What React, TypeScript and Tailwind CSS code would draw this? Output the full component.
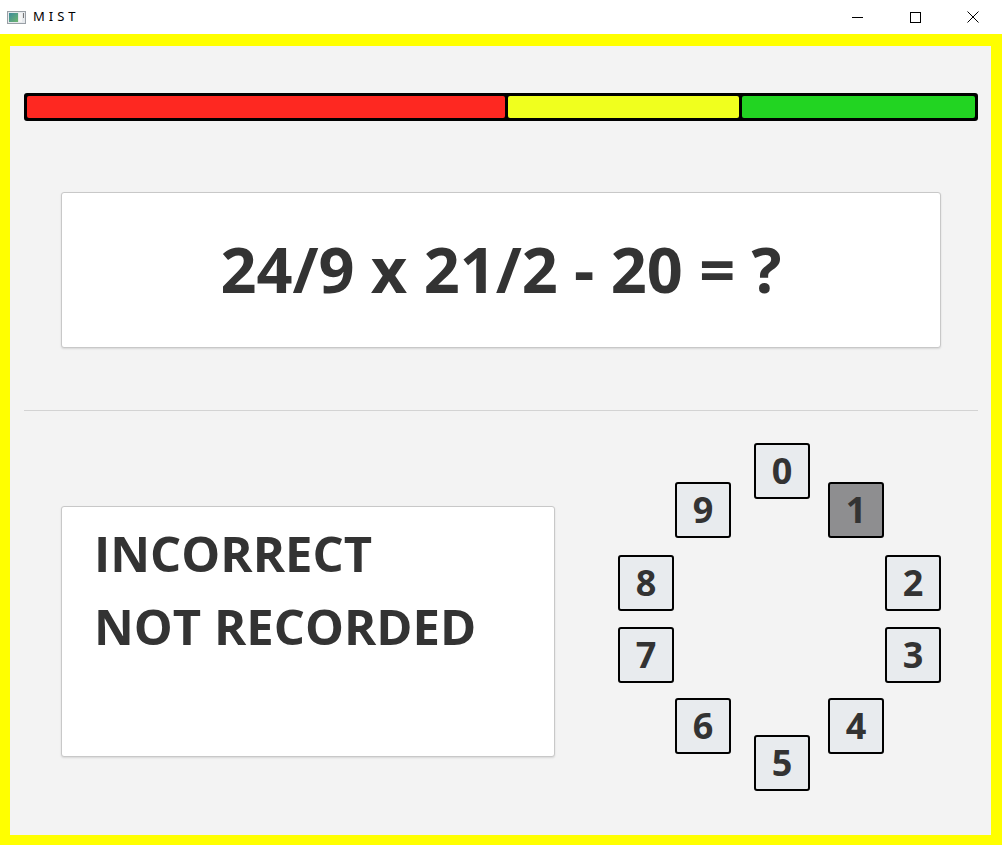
import React from 'react';

const KEYS: { n: number; left: number; top: number }[] = [
  { n: 0, left: 136, top: 0 },
  { n: 1, left: 210, top: 39 },
  { n: 9, left: 57, top: 39 },
  { n: 8, left: 0, top: 112 },
  { n: 2, left: 267, top: 112 },
  { n: 7, left: 0, top: 184 },
  { n: 3, left: 267, top: 184 },
  { n: 6, left: 57, top: 255 },
  { n: 4, left: 210, top: 255 },
  { n: 5, left: 136, top: 292 },
];

const SELECTED = 1;

export default function App() {
  return (
    <div className="w-[1002px] h-[845px] flex flex-col bg-white font-['Open_Sans',sans-serif] text-[#333333]">
      {/* Window title bar */}
      <div className="h-[34px] flex items-center bg-white">
        <div className="ml-[7px] w-[19px] h-[13px] border border-[#9aa0a6] bg-[#e6e9ec] flex p-[1px] gap-[1px]">
          <div className="w-[9px] h-full bg-gradient-to-br from-[#3d8a9a] to-[#6fb56a]" />
          <div className="flex-1 h-full bg-[#f5f5f5]" />
          <div className="w-[1px] h-[5px] bg-[#777]" />
        </div>
        <span className="ml-[7px] text-[13px] tracking-[4px] text-black font-['Noto_Sans',sans-serif]">MIST</span>
        <div className="ml-auto flex items-center h-full">
          <div className="w-[58px] h-full flex items-center justify-center">
            <div className="w-[11px] h-[1px] bg-black" />
          </div>
          <div className="w-[58px] h-full flex items-center justify-center">
            <div className="w-[11px] h-[11px] border border-black" />
          </div>
          <div className="w-[58px] h-full flex items-center justify-center">
            <svg width="12" height="12" viewBox="0 0 12 12">
              <path d="M0.5 0.5 L11.5 11.5 M11.5 0.5 L0.5 11.5" stroke="black" strokeWidth="1" />
            </svg>
          </div>
        </div>
      </div>

      {/* App area with yellow frame */}
      <div className="flex-1 border-t-[12px] border-l-[10px] border-r-[11px] border-b-[10px] border-[#ffff00] bg-[#f3f3f3] flex flex-col">
        {/* Timer bar */}
        <div className="mt-[47px] ml-[14px] mr-[13px] h-[28px] border-[3px] border-black rounded-[3px] bg-black flex gap-[3px]">
          <div className="flex-[478] bg-[#fe2821] rounded-[2px]" />
          <div className="flex-[231] bg-[#f0ff1e] rounded-[2px]" />
          <div className="flex-[233] bg-[#22d422] rounded-[2px]" />
        </div>

        {/* Question */}
        <div className="mt-[71px] ml-[51px] mr-[50px] h-[156px] bg-white border border-[#c8c8c8] rounded-[3px] shadow-[0_1px_2px_rgba(0,0,0,0.12)] flex items-center justify-center">
          <span className="text-[63px] font-bold leading-none -mt-[4px]">24/9 x 21/2 - 20 = ?</span>
        </div>

        {/* Divider */}
        <div className="mt-[62px] ml-[14px] mr-[13px] h-[1px] bg-[#d3d3d3]" />

        {/* Result and keypad */}
        <div className="flex mt-[32px]">
          <div className="ml-[51px] mt-[63px] w-[494px] h-[251px] bg-white border border-[#c8c8c8] rounded-[3px] shadow-[0_1px_2px_rgba(0,0,0,0.12)] pl-[32px] pt-[10px]">
            <div className="text-[49px] font-bold leading-[73px]">INCORRECT</div>
            <div className="text-[49px] font-bold leading-[73px]">NOT RECORDED</div>
          </div>

          <div className="relative ml-[63px] w-[323px] h-[349px]">
            {KEYS.map(k => (
              <div
                key={k.n}
                className={
                  'absolute w-[56px] h-[56px] border-2 border-black rounded-[3px] flex items-center justify-center text-[36px] font-bold leading-none ' +
                  (k.n === SELECTED ? 'bg-[#8e8e90]' : 'bg-[#e8ebee]')
                }
                style={{ left: k.left, top: k.top }}
              >
                {k.n}
              </div>
            ))}
          </div>
        </div>
      </div>
    </div>
  );
}
